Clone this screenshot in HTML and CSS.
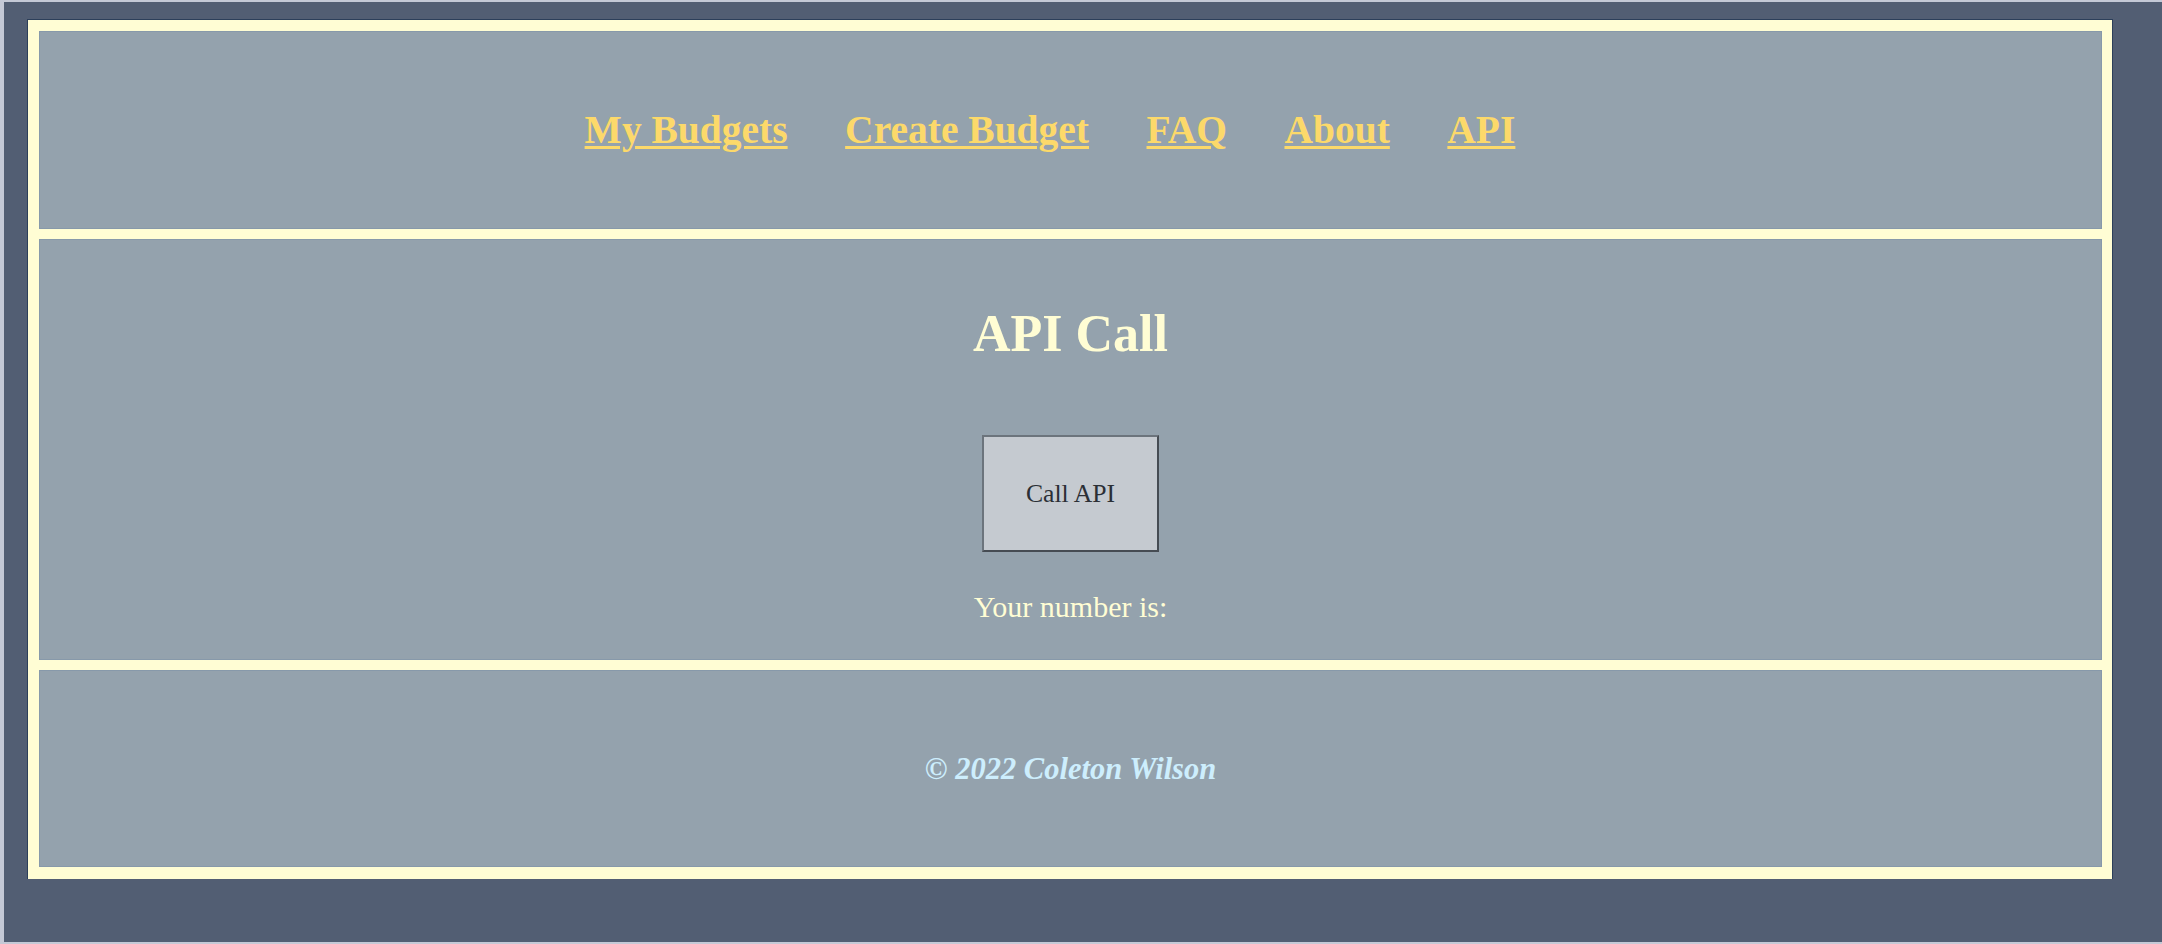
FILE: index.html
```html
<!DOCTYPE html>
<html lang="en">
<head>
<meta charset="utf-8">
<title>API Call</title>
<link rel="stylesheet" href="styles.css">
</head>
<body>
<div class="page">
  <div class="frame">
    <header class="panel header">
      <nav class="nav">
        <a href="#">My Budgets</a>
        <a href="#">Create Budget</a>
        <a href="#">FAQ</a>
        <a href="#">About</a>
        <a href="#">API</a>
      </nav>
    </header>
    <main class="panel main">
      <h1 class="title">API Call</h1>
      <button class="call-btn" type="button">Call API</button>
      <p class="result">Your number is:</p>
    </main>
    <footer class="panel footer">
      <p class="copy">© 2022 Coleton Wilson</p>
    </footer>
  </div>
</div>
</body>
</html>
```

FILE: styles.css
```css
html {
  background: #c4c9d6;
}
body {
  margin: 0;
  font-family: "Liberation Serif", "Times New Roman", serif;
}
.page {
  margin: 2px 0 2px 4px;
  height: 940px;
  box-sizing: border-box;
  background: #525e73;
  padding: 17px 49px 0 23px;
}
.frame {
  border: 1px solid #2c3f5a;
  border-bottom: 0;
  background: #fffdd4;
  padding: 11px 10px 12px 11px;
  display: flex;
  flex-direction: column;
  gap: 10px;
}
.panel {
  background: #94a2ad;
  border: 1px solid #8799aa;
  box-sizing: border-box;
}
.header {
  height: 198px;
  display: flex;
  align-items: center;
  justify-content: center;
  padding-right: 41px;
}
.nav {
  display: flex;
  gap: 57.5px;
  line-height: 44px;
}
.nav a {
  font-size: 39.5px;
  font-weight: bold;
  color: #fcd96a;
  text-decoration: underline;
  text-decoration-thickness: 3px;
  text-underline-offset: 2.5px;
}
.main {
  height: 421px;
  display: flex;
  flex-direction: column;
  align-items: center;
  padding-top: 65px;
}
.title {
  margin: 0;
  font-size: 52px;
  line-height: 58px;
  font-weight: bold;
  color: #fffdd4;
}
.call-btn {
  margin-top: 72px;
  width: 177px;
  height: 117px;
  box-sizing: border-box;
  background: #c5cad0;
  border: 2px solid;
  border-color: #6c747c #464c53 #464c53 #6c747c;
  font-family: "Liberation Serif", "Times New Roman", serif;
  font-size: 25.7px;
  color: #2b2f35;
  padding: 0;
}
.result {
  margin: 38px 0 0;
  font-size: 30px;
  line-height: 34px;
  color: #fffdd4;
}
.footer {
  height: 197px;
  display: flex;
  align-items: center;
  justify-content: center;
}
.copy {
  margin: 0;
  font-size: 30.5px;
  line-height: 34px;
  font-weight: bold;
  font-style: italic;
  color: #cdeefd;
}
```
